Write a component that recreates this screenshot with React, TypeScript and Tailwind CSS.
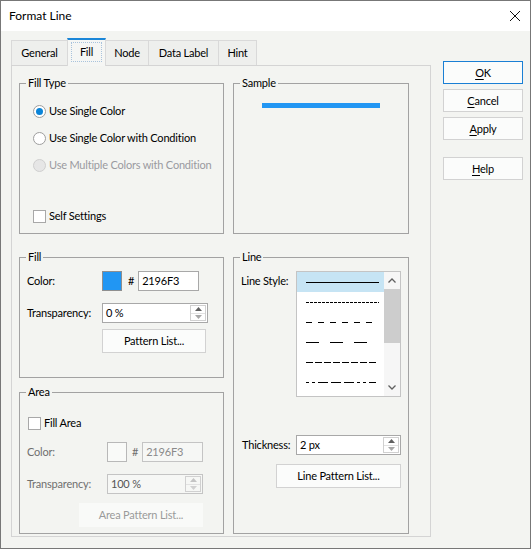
import React from "react";

function Radio({ checked, disabled, label }: { checked?: boolean; disabled?: boolean; label: string }) {
  return (
    <div className="flex h-[16px] items-center whitespace-nowrap">
      <div
        className={
          "flex h-[13px] w-[13px] shrink-0 items-center justify-center rounded-full border " +
          (disabled ? "border-[#cfcfcf] bg-[#e6e6e6]" : "border-[#9e9e9e] bg-white")
        }
      >
        {checked && <div className="h-[7px] w-[7px] rounded-full bg-[#0a84d8]" />}
      </div>
      <span className={"ml-[3px] " + (disabled ? "text-[#9a9aa0]" : "text-black")}>{label}</span>
    </div>
  );
}

function Check({ label }: { label: string }) {
  return (
    <div className="flex h-[16px] items-center whitespace-nowrap">
      <div className="h-[13px] w-[13px] shrink-0 border border-[#a8a8a8] bg-white" />
      <span className="ml-[3px]">{label}</span>
    </div>
  );
}

function Spinner({ disabled }: { disabled?: boolean }) {
  const c = disabled ? "#c4c4c4" : "#606060";
  const c2 = disabled ? "#d0d0d0" : "#a8a8a8";
  return (
    <div className="my-[1px] mr-[1px] flex w-[16px] shrink-0 flex-col border border-[#d0d0d0]">
      <div className="flex flex-1 items-center justify-center">
        <svg width="7" height="4" viewBox="0 0 7 4">
          <polygon points="0,4 7,4 3.5,0" fill={c} />
        </svg>
      </div>
      <div className="flex flex-1 items-center justify-center border-t border-[#e2e2e2]">
        <svg width="7" height="4" viewBox="0 0 7 4">
          <polygon points="0,0 7,0 3.5,4" fill={c2} />
        </svg>
      </div>
    </div>
  );
}

function Legend({ children }: { children: React.ReactNode }) {
  return <legend className="ml-[6px] px-[2px] leading-[16px]">{children}</legend>;
}

function LinePattern({ dash, len }: { dash?: string; len: number }) {
  return (
    <svg width={len} height="3" viewBox={`0 0 ${len} 3`} shapeRendering="crispEdges">
      <line x1="0" y1="1.5" x2={len} y2="1.5" stroke="#000" strokeWidth="1" strokeDasharray={dash} />
    </svg>
  );
}

function SideButton({ u, rest, primary, className }: { u: string; rest: string; primary?: boolean; className?: string }) {
  return (
    <div
      className={
        "flex h-[23px] w-[80px] items-center justify-center border bg-[#fbfcfb] " +
        (primary ? "border-[#1a7fd4]" : "border-[#d2d2d2]") +
        " " +
        (className || "")
      }
    >
      <span>
        <span className="underline underline-offset-2">{u}</span>
        {rest}
      </span>
    </div>
  );
}

export default function App() {
  return (
    <div className="h-[549px] w-[531px] whitespace-nowrap border border-[#777777] bg-[#f3f4f1] font-['Lato','Noto_Sans',sans-serif] text-[11px] leading-[16px] tracking-[-0.2px] text-black">
      {/* title bar */}
      <div className="flex h-[30px] items-center justify-between bg-white pl-[8px] pr-[9px]">
        <span className="text-[12px] tracking-normal">Format Line</span>
        <svg width="12" height="12" viewBox="0 0 12 12">
          <path d="M1 1 L11 11 M11 1 L1 11" stroke="#111" strokeWidth="1" />
        </svg>
      </div>

      <div className="flex pl-[10px] pt-[7px]">
        {/* left: tabs + page */}
        <div className="w-[420px]">
          <div className="flex h-[27px] items-end">
            <div className="flex h-[25px] w-[57px] items-center justify-center border border-b-0 border-[#d9d9d9] bg-[#eeefed]">General</div>
            <div className="relative z-10 -mb-px -ml-px flex h-[28px] w-[39px] items-center justify-center border-x border-t-2 border-x-[#d9d9d9] border-t-[#1a86d8] bg-[#f5f6f4] pb-[2px]">
              <span className="border border-dotted border-[#a9c3dc] px-[8px] py-[1px]">Fill</span>
            </div>
            <div className="-ml-px flex h-[25px] w-[44px] items-center justify-center border border-b-0 border-[#d9d9d9] bg-[#eeefed]">Node</div>
            <div className="-ml-px flex h-[25px] w-[71px] items-center justify-center border border-b-0 border-[#d9d9d9] bg-[#eeefed]">Data Label</div>
            <div className="-ml-px flex h-[25px] w-[39px] items-center justify-center border border-b-0 border-[#d9d9d9] bg-[#eeefed]">Hint</div>
          </div>

          <div className="flex h-[472px] gap-[9px] border border-[#d4d4d4] pl-[7px] pt-[9px]">
            {/* left column */}
            <div className="flex w-[205px] flex-col">
              <fieldset className="h-[159px] min-w-0 border border-[#a2a2a2]">
                <Legend>Fill Type</Legend>
                <div className="flex flex-col pl-[13px] pt-[12px]">
                  <div className="flex flex-col gap-[11px]">
                    <Radio checked label="Use Single Color" />
                    <Radio label="Use Single Color with Condition" />
                    <Radio disabled label="Use Multiple Colors with Condition" />
                  </div>
                  <div className="mt-[35px]">
                    <Check label="Self Settings" />
                  </div>
                </div>
              </fieldset>

              <fieldset className="mt-[15px] h-[129px] min-w-0 border border-[#a2a2a2]">
                <Legend>Fill</Legend>
                <div className="flex flex-col pl-[7px] pt-[6px]">
                  <div className="flex h-[20px] items-center">
                    <span className="w-[75px] shrink-0">Color:</span>
                    <div className="h-[20px] w-[20px] shrink-0 border border-[#8f8f8f] bg-[#2196F3]" />
                    <span className="ml-[6px]">#</span>
                    <div className="ml-[4px] flex h-[20px] w-[61px] shrink-0 items-center border border-[#a8a8a8] bg-white pl-[3px]">2196F3</div>
                  </div>
                  <div className="mt-[12px] flex h-[20px] items-center">
                    <span className="w-[75px] shrink-0">Transparency:</span>
                    <div className="flex h-[20px] w-[106px] shrink-0 border border-[#a8a8a8] bg-white">
                      <span className="flex flex-1 items-center pl-[3px]">0 %</span>
                      <Spinner />
                    </div>
                  </div>
                  <div className="ml-[75px] mt-[6px] flex h-[24px] w-[104px] items-center justify-center border border-[#d2d2d2] bg-[#fbfcfb]">
                    Pattern List...
                  </div>
                </div>
              </fieldset>

              <fieldset className="mt-[6px] h-[150px] min-w-0 border border-[#a2a2a2]">
                <Legend>Area</Legend>
                <div className="flex flex-col pl-[7px] pt-[15px]">
                  <div className="pl-[1px]">
                    <Check label="Fill Area" />
                  </div>
                  <div className="mt-[11px] flex h-[20px] items-center text-[#6f6f6f]">
                    <span className="w-[80px] shrink-0">Color:</span>
                    <div className="h-[20px] w-[20px] shrink-0 border border-[#b8b8b8] bg-[#f9faf8]" />
                    <span className="ml-[5px]">#</span>
                    <div className="ml-[4px] flex h-[20px] w-[61px] shrink-0 items-center border border-[#c4c4c4] bg-[#f6f7f5] pl-[3px] text-[#8a8a8a]">2196F3</div>
                  </div>
                  <div className="mt-[12px] flex h-[20px] items-center text-[#6f6f6f]">
                    <span className="w-[80px] shrink-0">Transparency:</span>
                    <div className="flex h-[20px] w-[96px] shrink-0 border border-[#c4c4c4] bg-[#f6f7f5]">
                      <span className="flex flex-1 items-center pl-[3px] text-[#555]">100 %</span>
                      <Spinner disabled />
                    </div>
                  </div>
                  <div className="ml-[52px] mt-[9px] flex h-[24px] w-[124px] items-center justify-center bg-[#f9faf8] text-[#9a9a9a]">
                    Area Pattern List...
                  </div>
                </div>
              </fieldset>
            </div>

            {/* right column */}
            <div className="flex w-[176px] flex-col">
              <fieldset className="h-[159px] min-w-0 border border-[#a2a2a2]">
                <Legend>Sample</Legend>
                <div className="pl-[28px] pt-[12px]">
                  <div className="h-[5px] w-[118px] bg-[#2196F3]" />
                </div>
              </fieldset>

              <fieldset className="mt-[15px] h-[285px] min-w-0 border border-[#a2a2a2]">
                <Legend>Line</Legend>
                <div className="flex flex-col pl-[7px] pt-[6px]">
                  <div className="flex">
                    <span className="w-[55px] shrink-0 pt-[2px]">Line Style:</span>
                    <div className="flex h-[126px] w-[105px] shrink-0 border border-[#c4c4c4] bg-white">
                      <div className="flex w-[87px] flex-col">
                        <div className="flex h-[20px] items-center bg-[#c6e4f4] pl-[9px]">
                          <LinePattern len={73} />
                        </div>
                        <div className="flex h-[20px] items-center pl-[9px]">
                          <LinePattern len={73} dash="3 1" />
                        </div>
                        <div className="flex h-[20px] items-center pl-[9px]">
                          <LinePattern len={67} dash="6 6" />
                        </div>
                        <div className="flex h-[20px] items-center pl-[9px]">
                          <LinePattern len={61} dash="13 11" />
                        </div>
                        <div className="flex h-[20px] items-center pl-[9px]">
                          <LinePattern len={72} dash="7 2" />
                        </div>
                        <div className="flex h-[20px] items-center pl-[9px]">
                          <LinePattern len={70} dash="3 3 3 3 10 3 10 3 10 3" />
                        </div>
                      </div>
                      <div className="flex w-[16px] flex-col bg-[#f6f6f6]">
                        <div className="flex h-[17px] items-center justify-center">
                          <svg width="8" height="5" viewBox="0 0 8 5">
                            <path d="M0.5 4.5 L4 1 L7.5 4.5" stroke="#606060" strokeWidth="1.3" fill="none" />
                          </svg>
                        </div>
                        <div className="h-[54px] bg-[#cdcdcd]" />
                        <div className="flex-1" />
                        <div className="flex h-[17px] items-center justify-center">
                          <svg width="8" height="5" viewBox="0 0 8 5">
                            <path d="M0.5 0.5 L4 4 L7.5 0.5" stroke="#606060" strokeWidth="1.3" fill="none" />
                          </svg>
                        </div>
                      </div>
                    </div>
                  </div>
                  <div className="mt-[38px] flex h-[20px] items-center">
                    <span className="w-[55px] shrink-0 pl-[1px]">Thickness:</span>
                    <div className="flex h-[20px] w-[105px] shrink-0 border border-[#a8a8a8] bg-white">
                      <span className="flex flex-1 items-center pl-[3px]">2 px</span>
                      <Spinner />
                    </div>
                  </div>
                  <div className="ml-[35px] mt-[9px] flex h-[24px] w-[125px] items-center justify-center border border-[#d2d2d2] bg-[#fbfcfb]">
                    Line Pattern List...
                  </div>
                </div>
              </fieldset>
            </div>
          </div>
        </div>

        {/* right buttons */}
        <div className="ml-[12px] flex flex-col pt-[23px]">
          <SideButton primary u="O" rest="K" />
          <SideButton u="C" rest="ancel" className="mt-[5px]" />
          <SideButton u="A" rest="pply" className="mt-[5px]" />
          <SideButton u="H" rest="elp" className="mt-[17px]" />
        </div>
      </div>
    </div>
  );
}
